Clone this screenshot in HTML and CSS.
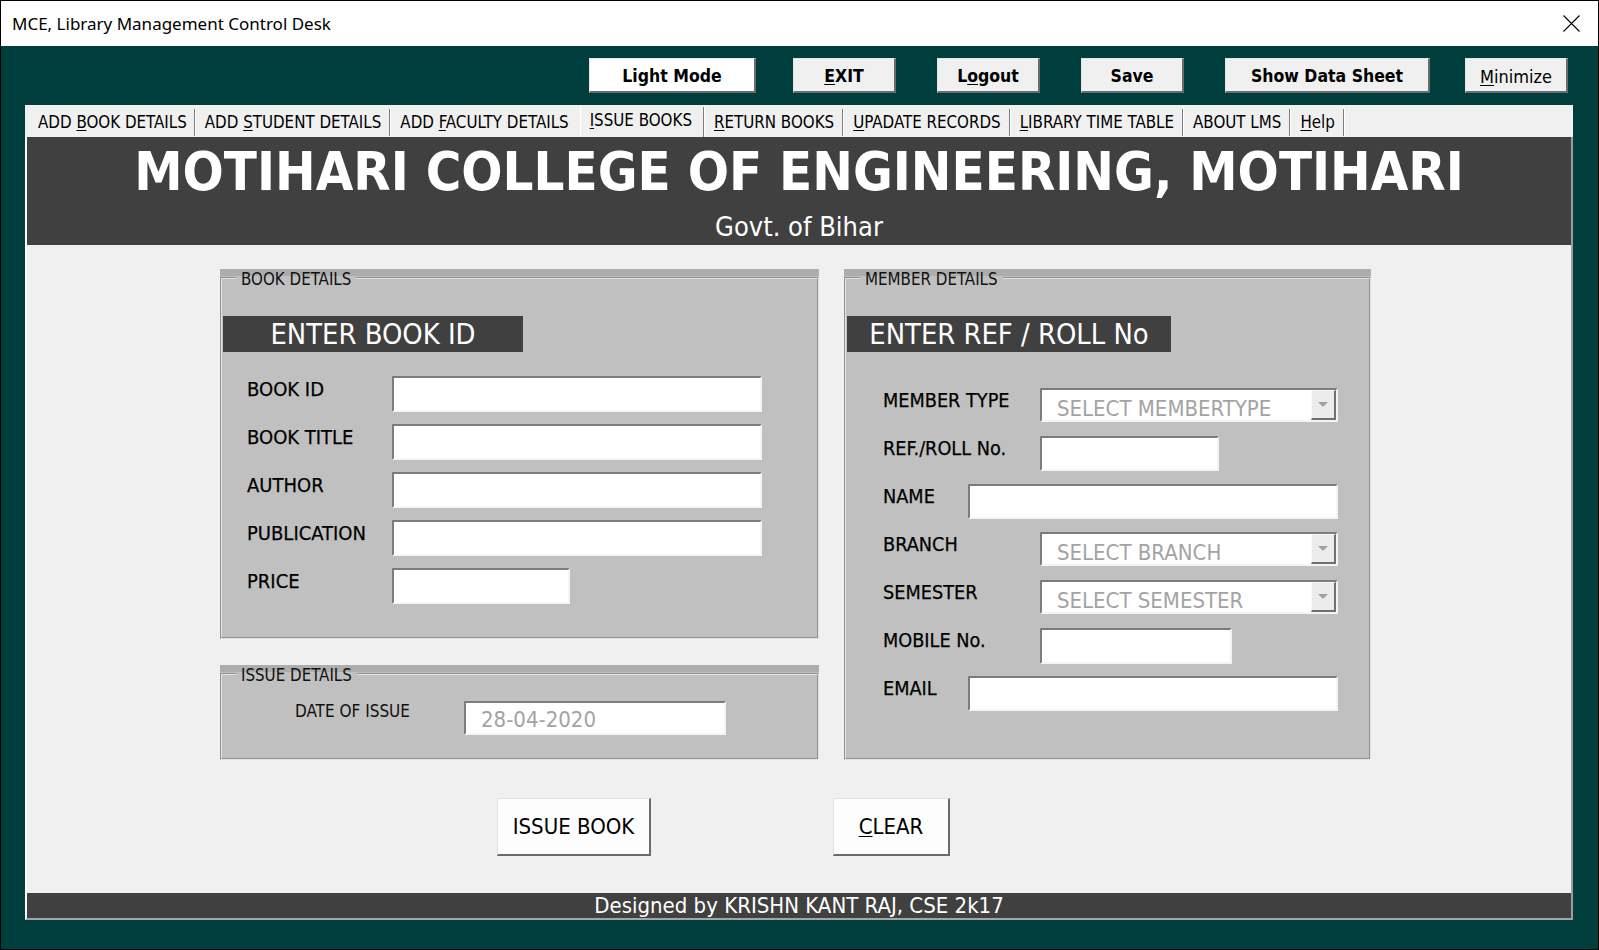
FILE: index.html
```html
<!DOCTYPE html>
<html>
<head>
<meta charset="utf-8">
<title>MCE, Library Management Control Desk</title>
<link rel="stylesheet" href="styles.css">
</head>
<body>
<div class="window">
  <div class="titlebar">
    <span class="title">MCE, Library Management Control Desk</span>
    <span class="close"><svg width="17" height="17" viewBox="0 0 17 17"><path d="M0.5 0.5 L16.5 16.5 M16.5 0.5 L0.5 16.5" stroke="#000" stroke-width="1.1" fill="none"/></svg></span>
  </div>
  <div class="client">
    <div class="toolbar">
      <button class="tbtn light">Light Mode</button>
      <button class="tbtn"><u>E</u>XIT</button>
      <button class="tbtn">L<u>o</u>gout</button>
      <button class="tbtn">Save</button>
      <button class="tbtn wide">Show Data Sheet</button>
      <button class="tbtn plain"><u>M</u>inimize</button>
    </div>
    <div class="multipage">
      <div class="tabs">
        <span class="tab first">ADD <u>B</u>OOK DETAILS</span>
        <span class="tab">ADD <u>S</u>TUDENT DETAILS</span>
        <span class="tab nosep">ADD <u>F</u>ACULTY DETAILS</span>
        <span class="tab active"><u>I</u>SSUE BOOKS</span>
        <span class="tab"><u>R</u>ETURN BOOKS</span>
        <span class="tab"><u>U</u>PADATE RECORDS</span>
        <span class="tab"><u>L</u>IBRARY TIME TABLE</span>
        <span class="tab">ABOUT LMS</span>
        <span class="tab"><u>H</u>elp</span>
      </div>
      <div class="page">
        <div class="header">
          <h1 class="college">MOTIHARI COLLEGE OF ENGINEERING, MOTIHARI</h1>
          <div class="govt">Govt. of Bihar</div>
        </div>
        <div class="content">
          <div class="forms">
            <div class="col-left">
              <div class="frame book">
                <fieldset class="fs">
                  <legend>BOOK DETAILS</legend>
                  <div class="banner book-banner">ENTER BOOK ID</div>
                  <div class="rows book-rows">
                    <div class="row"><span class="lbl">BOOK ID</span><span class="field w-full"></span></div>
                    <div class="row"><span class="lbl">BOOK TITLE</span><span class="field w-full"></span></div>
                    <div class="row"><span class="lbl">AUTHOR</span><span class="field w-full"></span></div>
                    <div class="row"><span class="lbl">PUBLICATION</span><span class="field w-full"></span></div>
                    <div class="row"><span class="lbl">PRICE</span><span class="field w-price"></span></div>
                  </div>
                </fieldset>
              </div>
              <div class="frame issue">
                <fieldset class="fs">
                  <legend>ISSUE DETAILS</legend>
                  <div class="issue-row">
                    <span class="lbl-small">DATE OF ISSUE</span>
                    <span class="field w-date"><span class="ph">28-04-2020</span></span>
                  </div>
                </fieldset>
              </div>
            </div>
            <div class="frame member">
              <fieldset class="fs">
                <legend>MEMBER DETAILS</legend>
                <div class="banner member-banner">ENTER REF / ROLL No</div>
                <div class="rows member-rows">
                  <div class="mrow"><span class="mlbl">MEMBER TYPE</span><span class="combo"><span class="ph">SELECT MEMBERTYPE</span><span class="arrow"></span></span></div>
                  <div class="mrow"><span class="mlbl">REF./ROLL No.</span><span class="field w-ref"></span></div>
                  <div class="mrow"><span class="mlbl short">NAME</span><span class="field w-wide"></span></div>
                  <div class="mrow"><span class="mlbl">BRANCH</span><span class="combo"><span class="ph">SELECT BRANCH</span><span class="arrow"></span></span></div>
                  <div class="mrow"><span class="mlbl">SEMESTER</span><span class="combo"><span class="ph">SELECT SEMESTER</span><span class="arrow"></span></span></div>
                  <div class="mrow"><span class="mlbl">MOBILE No.</span><span class="field w-mob"></span></div>
                  <div class="mrow"><span class="mlbl short">EMAIL</span><span class="field w-wide"></span></div>
                </div>
              </fieldset>
            </div>
          </div>
          <div class="actions">
            <button class="abtn issue-btn">ISSUE BOOK</button>
            <button class="abtn clear-btn"><u>C</u>LEAR</button>
          </div>
        </div>
        <div class="footer">Designed by KRISHN KANT RAJ, CSE 2k17</div>
      </div>
    </div>
  </div>
</div>
</body>
</html>
```

FILE: styles.css
```css
* { box-sizing: border-box; }
html, body { margin: 0; padding: 0; }
body {
  width: 1599px;
  height: 950px;
  overflow: hidden;
  background: #013f3f;
  font-family: "DejaVu Sans Condensed", "DejaVu Sans", sans-serif;
  color: #000;
}
u { text-decoration: underline; text-underline-offset: 2px; text-decoration-thickness: 1px; }

.window {
  width: 1599px;
  height: 950px;
  border: 1px solid #000;
  display: flex;
  flex-direction: column;
  background: #013f3f;
}

.titlebar {
  height: 45px;
  flex: none;
  background: #fff;
  display: flex;
  align-items: center;
  justify-content: space-between;
  padding: 0 18px 0 11px;
  font-family: "Noto Sans", "Open Sans", sans-serif;
  font-size: 17px;
}
.close svg { display: block; }

.client { flex: 1; display: flex; flex-direction: column; }

.toolbar {
  display: flex;
  justify-content: flex-end;
  gap: 41px;
  padding: 12px 30px 0 0;
  height: 47px;
  flex: none;
}
.tbtn {
  height: 35px;
  width: 103px;
  padding: 2px 0 0 0;
  font-family: "DejaVu Sans Condensed", "DejaVu Sans", sans-serif;
  font-weight: bold;
  font-size: 17.5px;
  color: #000;
  background: #f0f0f0;
  border-style: solid;
  border-width: 1px 2px 2px 1px;
  border-color: #e6e6e6 #6b6b6b #6b6b6b #e6e6e6;
}
.tbtn.light { width: 167px; background: #fff; margin-right: -4px; }
.tbtn.wide { width: 205px; margin-right: -6px; }
.tbtn.plain { font-weight: normal; font-size: 18px; }

.multipage {
  margin: 12px 0 0 24px;
  width: 1548px;
}

.tabs {
  height: 32px;
  background: #f0f0f0;
  display: flex;
  align-items: flex-end;
  padding-left: 2px;
  font-size: 16.8px;
}
.tab {
  height: 27px;
  line-height: 26px;
  padding: 0 8px 0 9px;
  border-right: 1px solid #7d7d7d;
  box-shadow: 1px 0 0 #fff;
  margin-right: 1px;
  margin-bottom: 1px;
  white-space: nowrap;
}
.tab.first { padding-left: 11px; padding-right: 7px; }
.tab.nosep { border-right-color: transparent; box-shadow: none; padding-right: 9px; }
.tab.active {
  height: 30px;
  line-height: 26px;
  padding: 0 11px 4px 9px;
  border-left: 1px solid #fff;
  margin-bottom: 0;
}

.page {
  border-left: 2px solid #fff;
  border-right: 2px solid #9c9c9c;
  border-bottom: 2px solid #a5a5a5;
  background: #f0f0f0;
}

.header {
  height: 108px;
  background: #404040;
  color: #fff;
  text-align: center;
  padding-top: 4px;
}
.college {
  margin: 0;
  font-size: 54px;
  line-height: 62px;
  font-weight: bold;
}
.govt {
  font-size: 27px;
  line-height: 36px;
  margin-top: 6px;
}

.content {
  height: 648px;
  padding: 24px 0 0 193px;
}
.forms {
  display: grid;
  grid-template-columns: 599px 527px;
  column-gap: 25px;
  align-items: start;
}
.col-left { display: flex; flex-direction: column; gap: 26px; }

.frame {
  background: linear-gradient(#adadad 0, #adadad 7px, #c0c0c0 7px);
}
.frame.book { height: 370px; }
.frame.issue { height: 95px; }
.frame.member { height: 491px; }

.fs {
  margin: 0;
  padding: 0;
  height: 100%;
  border: 2px groove #e4e4e4;
  min-width: 0;
}
.fs legend {
  margin-left: 14px;
  padding: 2px 5px 0 5px;
  font-size: 16.8px;
  line-height: 16px;
  color: #111;
}

.banner {
  height: 36px;
  background: #404040;
  color: #fff;
  font-size: 28.8px;
  line-height: 36px;
  text-align: center;
  margin-top: 29px;
  margin-left: 1px;
}
.book-banner { width: 300px; }
.member-banner { width: 324px; }

.rows { display: flex; flex-direction: column; gap: 12px; }
.book-rows { margin-top: 24px; padding-left: 25px; }
.row { display: flex; height: 36px; align-items: flex-start; }
.lbl {
  width: 145px;
  font-size: 20px;
  line-height: 26px;
  -webkit-text-stroke: 0.25px #000;
}
.field {
  display: block;
  height: 36px;
  background: #fff;
  border-style: solid;
  border-width: 2px;
  border-color: #7c7c7c #f4f4f4 #f4f4f4 #7c7c7c;
}
.w-full { width: 370px; }
.w-price { width: 178px; }
.w-date { width: 262px; height: 34px; padding-left: 15px; }
.w-ref { width: 179px; height: 35px; }
.w-mob { width: 192px; }
.w-wide { width: 370px; height: 35px; }

.ph {
  color: #a3a3a3;
  font-size: 22px;
  line-height: 34px;
  white-space: nowrap;
}
.w-date .ph { line-height: 33px; }

.issue-row {
  display: flex;
  align-items: flex-start;
  padding-left: 73px;
  margin-top: 18px;
}
.lbl-small {
  width: 169px;
  font-size: 17px;
  line-height: 20px;
  color: #111;
}

.member-rows { margin-top: 36px; padding-left: 37px; }
.mrow { display: flex; height: 36px; align-items: flex-start; }
.mlbl {
  width: 157px;
  font-size: 19.7px;
  line-height: 26px;
  -webkit-text-stroke: 0.25px #000;
}
.mlbl.short { width: 85px; }

.combo {
  width: 298px;
  height: 34px;
  background: #fff;
  border-style: solid;
  border-width: 2px;
  border-color: #7c7c7c #f4f4f4 #f4f4f4 #7c7c7c;
  display: flex;
  align-items: center;
  justify-content: space-between;
  padding-left: 15px;
}
.combo .ph { line-height: 30px; padding-top: 7px; }
.arrow {
  width: 25px;
  height: 30px;
  background: #ececec;
  border-style: solid;
  border-width: 1px 2px 2px 1px;
  border-color: #f8f8f8 #6f6f6f #6f6f6f #f8f8f8;
  display: flex;
  align-items: center;
  justify-content: center;
}
.arrow::after {
  content: "";
  width: 0;
  height: 0;
  border-left: 5px solid transparent;
  border-right: 5px solid transparent;
  border-top: 5px solid #a0a0a0;
}

.actions {
  display: flex;
  gap: 182px;
  margin-top: 38px;
  padding-left: 277px;
}
.abtn {
  height: 58px;
  padding: 0;
  font-family: "DejaVu Sans Condensed", "DejaVu Sans", sans-serif;
  font-size: 22px;
  color: #000;
  background: #fdfdfd;
  border-style: solid;
  border-width: 1px 2px 2px 1px;
  border-color: #e2e2e2 #6b6b6b #6b6b6b #e2e2e2;
}
.issue-btn { width: 154px; }
.clear-btn { width: 117px; }

.footer {
  height: 25px;
  background: #404040;
  color: #fff;
  text-align: center;
  font-size: 22px;
  line-height: 26px;
}
```
